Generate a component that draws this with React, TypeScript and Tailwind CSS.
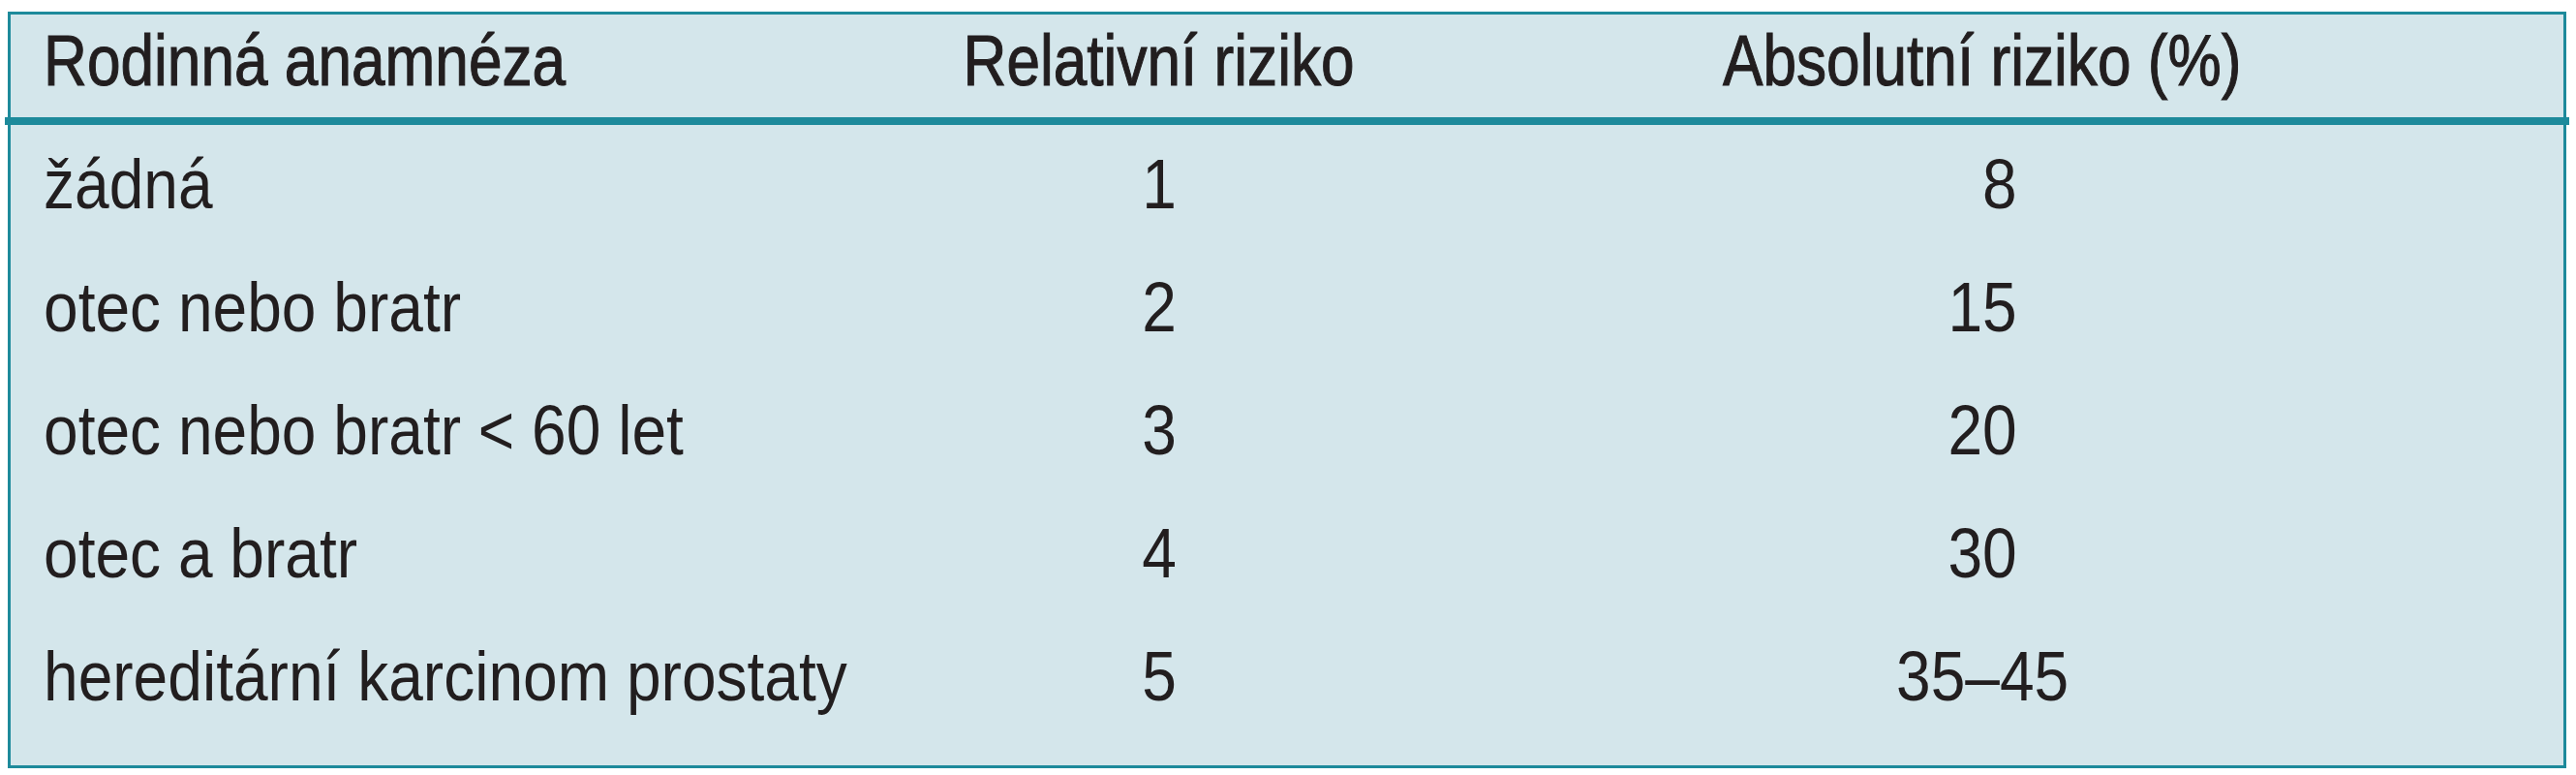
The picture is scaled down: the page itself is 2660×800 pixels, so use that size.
import React from "react";

const rows: { a: string; b: string; c: string }[] = [
  { a: "žádná", b: "1", c: "\u20078" },
  { a: "otec nebo bratr", b: "2", c: "15" },
  { a: "otec nebo bratr < 60 let", b: "3", c: "20" },
  { a: "otec a bratr", b: "4", c: "30" },
  { a: "hereditární karcinom prostaty", b: "5", c: "35–45" },
];

export default function App() {
  return (
    <div
      className="w-[2660px] h-[800px] bg-white pt-[12px] pl-[8px] text-[#221e1f]"
      style={{ fontFamily: '"Liberation Sans", Arial, sans-serif' }}
    >
      <div className="w-[2642px] h-[781px] border-[3px] border-[#1d8a9b] bg-[#d4e6eb] flex flex-col">
        <div className="grid grid-cols-[936px_500px_1200px] h-[106px] pt-[11px] text-[74px] leading-[74px] [-webkit-text-stroke:1.1px_#221e1f]">
          <div className="pl-[34px] whitespace-nowrap">
            <span className="inline-block origin-left scale-x-[0.84]">Rodinná anamnéza</span>
          </div>
          <div className="text-center whitespace-nowrap">
            <span className="inline-block origin-center scale-x-[0.84]">Relativní riziko</span>
          </div>
          <div className="text-center whitespace-nowrap">
            <span className="inline-block origin-center scale-x-[0.84]">Absolutní riziko (%)</span>
          </div>
        </div>
        <div className="h-[8px] -mx-[6px] bg-[#1d8a9b]" />
        <div className="flex flex-col">
          {rows.map((r, i) => (
            <div
              key={i}
              className="grid grid-cols-[936px_500px_1200px] h-[127px] text-[72px] leading-[122px] whitespace-nowrap"
            >
              <div className="pl-[34px]">
                <span className="inline-block origin-left scale-x-[0.89]">{r.a}</span>
              </div>
              <div className="text-center">
                <span className="inline-block origin-center scale-x-[0.89]">{r.b}</span>
              </div>
              <div className="text-center">
                <span className="inline-block origin-center scale-x-[0.89] tabular-nums">{r.c}</span>
              </div>
            </div>
          ))}
        </div>
      </div>
    </div>
  );
}
